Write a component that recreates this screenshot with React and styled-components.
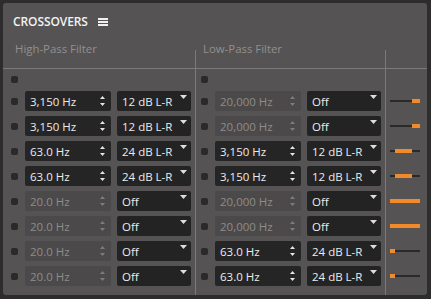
import React from 'react'
import styled, { createGlobalStyle } from 'styled-components'

const GlobalStyle = createGlobalStyle`
  html, body {
    margin: 0;
    padding: 0;
    background: #2e2d2d;
  }
  body {
    font-family: "Open Sans", "Noto Sans", sans-serif;
  }
`

const rows = [
  { hp: 3150, hpSlope: '12 dB L-R', lp: 20000, lpSlope: 'Off' },
  { hp: 3150, hpSlope: '12 dB L-R', lp: 20000, lpSlope: 'Off' },
  { hp: 63, hpSlope: '24 dB L-R', lp: 3150, lpSlope: '12 dB L-R' },
  { hp: 63, hpSlope: '24 dB L-R', lp: 3150, lpSlope: '12 dB L-R' },
  { hp: 20, hpSlope: 'Off', lp: 20000, lpSlope: 'Off' },
  { hp: 20, hpSlope: 'Off', lp: 20000, lpSlope: 'Off' },
  { hp: 20, hpSlope: 'Off', lp: 63, lpSlope: '24 dB L-R' },
  { hp: 20, hpSlope: 'Off', lp: 63, lpSlope: '24 dB L-R' },
]

const fmtHz = (f) => {
  if (f >= 1000) return f.toLocaleString('en-US') + ' Hz'
  return f.toFixed(1) + ' Hz'
}

// position on a 20 Hz .. 20 kHz log axis, 0..1
const logPos = (f) => Math.log10(f / 20) / 3

const SpinArrows = ({ off }) => (
  <svg width="5" height="10" viewBox="0 0 5 10">
    <polygon points="2.5,0 5,3 0,3" fill={off ? '#7e7c7c' : '#e6e6e6'} />
    <polygon points="0,7 5,7 2.5,10" fill={off ? '#7e7c7c' : '#e6e6e6'} />
  </svg>
)

const ComboArrow = () => (
  <svg width="7" height="4" viewBox="0 0 7 4">
    <polygon points="0,0 7,0 3.5,4" fill="#dedede" />
  </svg>
)

const Hamburger = () => (
  <svg width="10" height="8" viewBox="0 0 10 8">
    <rect x="0" y="0" width="10" height="2" fill="#f0f0f0" />
    <rect x="0" y="3" width="10" height="2" fill="#f0f0f0" />
    <rect x="0" y="6" width="10" height="2" fill="#f0f0f0" />
  </svg>
)

const FilterRow = ({ lead, freq, slope }) => {
  const off = slope === 'Off'
  return (
    <Row $lead={lead}>
      <Check />
      <Spin $off={off}>
        <span>{fmtHz(freq)}</span>
        <SpinArrows off={off} />
      </Spin>
      <Combo>
        <span>{slope}</span>
        <ComboArrow />
      </Combo>
    </Row>
  )
}

const SlopeBar = ({ hp, hpSlope, lp, lpSlope }) => {
  const from = hpSlope === 'Off' ? 0 : logPos(hp)
  const to = lpSlope === 'Off' ? 1 : logPos(lp)
  return (
    <Row $lead={4}>
      <Track>
        <Band style={{ left: `${from * 100}%`, width: `${(to - from) * 100}%` }} />
      </Track>
    </Row>
  )
}

const App = () => {
  return (
    <Panel>
      <GlobalStyle />
      <Header>
        <Title>CROSSOVERS</Title>
        <Hamburger />
      </Header>
      <Grid>
        <ColHead $lead={12} $sep>High-Pass Filter</ColHead>
        <ColHead $lead={7} $sep>Low-Pass Filter</ColHead>
        <ColHead />

        <Col $sep>
          <FirstRow $lead={8}><Check /></FirstRow>
          {rows.map((r, i) => (
            <FilterRow key={i} lead={8} freq={r.hp} slope={r.hpSlope} />
          ))}
        </Col>
        <Col $sep>
          <FirstRow $lead={5}><Check /></FirstRow>
          {rows.map((r, i) => (
            <FilterRow key={i} lead={5} freq={r.lp} slope={r.lpSlope} />
          ))}
        </Col>
        <Col>
          <FirstRow $lead={4} />
          {rows.map((r, i) => (
            <SlopeBar key={i} {...r} />
          ))}
        </Col>
      </Grid>
    </Panel>
  )
}

export default App

const Panel = styled.div`
  margin: 3px 0 0 3px;
  width: 424px;
  height: 292px;
  background: #555353;
  border-radius: 3px;
  display: flex;
  flex-direction: column;
  overflow: hidden;
`

const Header = styled.div`
  height: 37px;
  flex: none;
  display: flex;
  align-items: center;
  gap: 10px;
  padding-left: 10px;
`

const Title = styled.div`
  color: #f2f2f2;
  font-size: 12px;
  font-weight: 600;
  letter-spacing: -0.1px;
`

const Grid = styled.div`
  flex: 1;
  display: grid;
  grid-template-columns: 193px 190px 1fr;
  grid-template-rows: 29px 1fr;
`

const ColHead = styled.div`
  position: relative;
  box-sizing: border-box;
  padding: 2px 0 0 ${(p) => p.$lead || 0}px;
  border-bottom: 1px solid #7b7979;
  color: #929090;
  font-size: 11.4px;
  line-height: 14px;

  &::after {
    content: '';
    display: ${(p) => (p.$sep ? 'block' : 'none')};
    position: absolute;
    right: 0;
    top: 10px;
    bottom: 0;
    width: 1px;
    background: #7b7979;
  }
`

const Col = styled.div`
  box-sizing: border-box;
  display: flex;
  flex-direction: column;
  gap: 5px;
  border-right: ${(p) => (p.$sep ? '1px solid #7b7979' : 'none')};
`

const Row = styled.div`
  height: 20px;
  display: flex;
  align-items: center;
  gap: 6px;
  padding-left: ${(p) => p.$lead}px;
`

const FirstRow = styled.div`
  height: 10px;
  padding-top: 7px;
  padding-left: ${(p) => p.$lead}px;
  display: flex;
  align-items: flex-start;
`

const Check = styled.div`
  width: 7px;
  height: 7px;
  margin-right: 1px;
  border-radius: 2px;
  background: #2b2a2a;
  flex: none;
`

const Spin = styled.div`
  box-sizing: border-box;
  width: 86px;
  height: 20px;
  padding: 0 6px 0 5px;
  display: flex;
  align-items: center;
  justify-content: space-between;
  border-radius: 2px;
  background: ${(p) => (p.$off ? '#4b4949' : '#262525')};
  color: ${(p) => (p.$off ? '#8e8c8c' : '#ececec')};
  font-size: 11.5px;
`

const Combo = styled.div`
  box-sizing: border-box;
  width: 74px;
  height: 20px;
  padding: 0 4px 0 5px;
  display: flex;
  align-items: center;
  justify-content: space-between;
  border-radius: 2px;
  background: #242323;
  color: #ececec;
  font-size: 11.5px;

  svg {
    align-self: flex-start;
    margin-top: 4px;
  }
`

const Track = styled.div`
  position: relative;
  width: 30px;
  height: 2px;
  background: #2b2a2a;
`

const Band = styled.div`
  position: absolute;
  top: -1px;
  height: 4px;
  background: #f28a2a;
`
